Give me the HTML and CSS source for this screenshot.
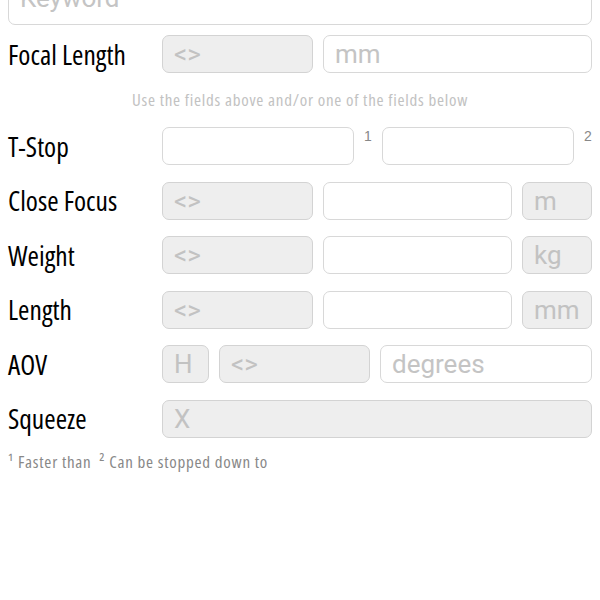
FILE: index.html
```html
<!DOCTYPE html>
<html lang="en">
<head>
<meta charset="utf-8">
<title>Lens search</title>
<link rel="stylesheet" href="styles.css">
</head>
<body>
<form class="search">
  <input class="field keyword" type="text" placeholder="Keyword">

  <div class="row">
    <label class="label">Focal Length</label>
    <div class="fields">
      <input class="field off w151" type="text" placeholder="&lt;&gt;" disabled>
      <input class="field grow" type="text" placeholder="mm">
    </div>
  </div>

  <p class="hint">Use the fields above and/or one of the fields below</p>

  <div class="rows">
    <div class="row">
      <label class="label">T-Stop</label>
      <div class="fields">
        <input class="field grow" type="text">
        <sup class="mark">1</sup>
        <input class="field grow" type="text">
        <sup class="mark">2</sup>
      </div>
    </div>

    <div class="row">
      <label class="label">Close Focus</label>
      <div class="fields">
        <input class="field off w151" type="text" placeholder="&lt;&gt;" disabled>
        <input class="field grow" type="text">
        <input class="field off unit" type="text" placeholder="m" disabled>
      </div>
    </div>

    <div class="row">
      <label class="label">Weight</label>
      <div class="fields">
        <input class="field off w151" type="text" placeholder="&lt;&gt;" disabled>
        <input class="field grow" type="text">
        <input class="field off unit" type="text" placeholder="kg" disabled>
      </div>
    </div>

    <div class="row">
      <label class="label">Length</label>
      <div class="fields">
        <input class="field off w151" type="text" placeholder="&lt;&gt;" disabled>
        <input class="field grow" type="text">
        <input class="field off unit" type="text" placeholder="mm" disabled>
      </div>
    </div>

    <div class="row">
      <label class="label">AOV</label>
      <div class="fields">
        <input class="field off h" type="text" placeholder="H" disabled>
        <input class="field off w151" type="text" placeholder="&lt;&gt;" disabled>
        <input class="field grow" type="text" placeholder="degrees">
      </div>
    </div>

    <div class="row">
      <label class="label">Squeeze</label>
      <div class="fields">
        <input class="field off grow" type="text" placeholder="X" disabled>
      </div>
    </div>
  </div>

  <p class="notes">¹ Faster than&nbsp; ² Can be stopped down to</p>
</form>
</body>
</html>
```

FILE: styles.css
```css
* { box-sizing: border-box; }

html, body {
  margin: 0;
  padding: 0;
  background: #ffffff;
}

body {
  width: 600px;
  height: 600px;
  overflow: hidden;
}

.search {
  margin: -13px 0 0 0;
  padding: 0 8px;
  display: flex;
  flex-direction: column;
}

.field {
  height: 38px;
  margin: 0;
  padding: 0 11px;
  border: 1px solid #d8d8d8;
  border-radius: 7px;
  background: #ffffff;
  font-family: Roboto, "Liberation Sans", sans-serif;
  font-size: 26px;
  color: #333;
  outline: none;
  min-width: 0;
  width: 0;
}

.field::placeholder {
  color: #c4c4c4;
  opacity: 1;
}

.field.off {
  background: #eeeeee;
  border-color: #d3d3d3;
}

.field.off::placeholder {
  color: #c2c2c2;
}

.keyword {
  width: 100%;
  padding-bottom: 16px;
  margin-bottom: 10px;
}

.rows {
  display: flex;
  flex-direction: column;
  gap: 16.5px;
}

.row {
  display: flex;
  align-items: center;
  height: 38px;
}

.label {
  width: 154px;
  flex: none;
  font-family: "Open Sans", sans-serif;
  font-stretch: 75%;
  font-size: 27.5px;
  font-weight: 400;
  color: #000;
}

.fields {
  flex: 1;
  display: flex;
  align-items: center;
  gap: 10px;
  height: 38px;
}

.grow { flex: 1 1 0; }
.w151 { width: 151px; flex: none; }
.unit { width: 70px; flex: none; }
.h { width: 47px; flex: none; }

.mark {
  align-self: flex-start;
  font-family: "Liberation Sans", sans-serif;
  font-size: 14px;
  line-height: 16px;
  color: #888;
  width: 8px;
  margin-top: 1px;
}

.hint {
  margin: 0;
  height: 54px;
  line-height: 54px;
  text-align: center;
  font-family: "Open Sans", sans-serif;
  font-stretch: 75%;
  font-size: 17px;
  letter-spacing: 0.75px;
  color: #c2c2c2;
}

.notes {
  margin: 12px 0 0 0;
  font-family: "Open Sans", sans-serif;
  font-stretch: 75%;
  font-size: 17px;
  letter-spacing: 0.75px;
  line-height: 24px;
  color: #888;
}
```
